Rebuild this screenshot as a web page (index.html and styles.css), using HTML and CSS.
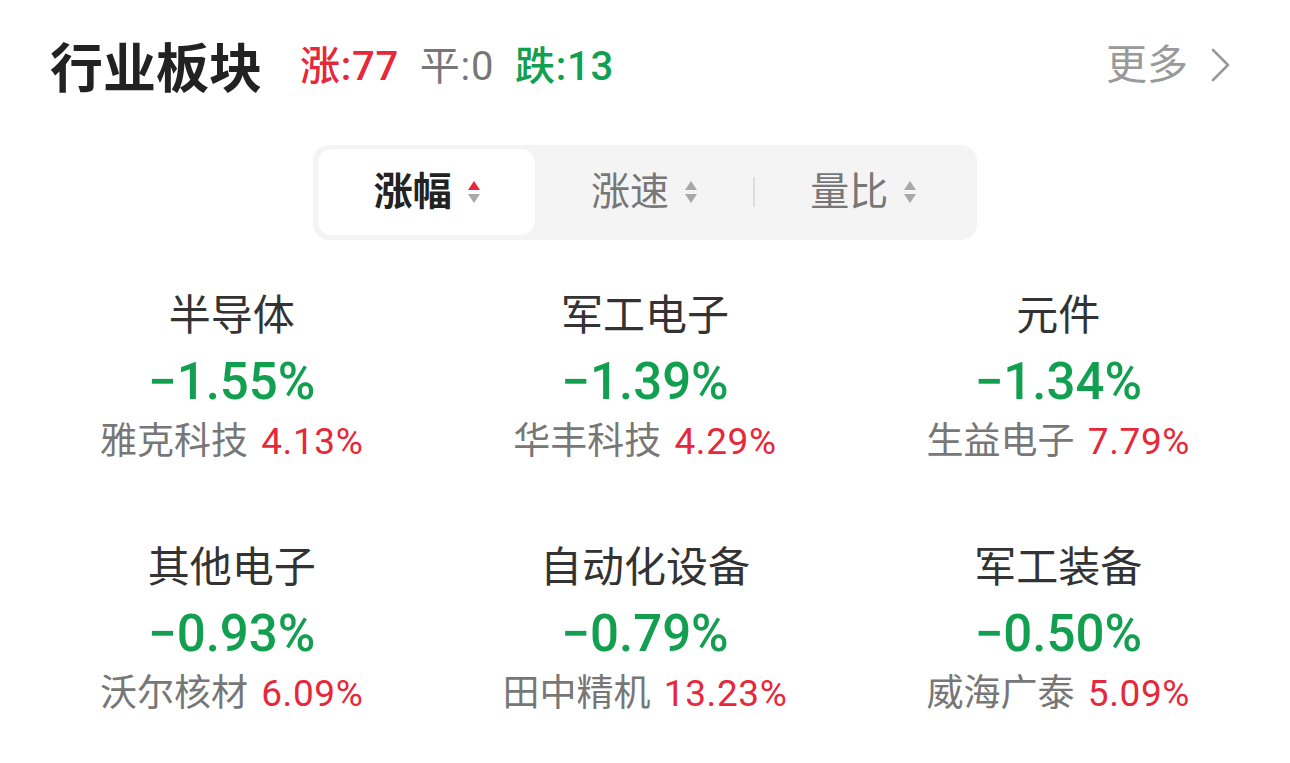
FILE: index.html
```html
<!DOCTYPE html>
<html lang="zh-CN">
<head>
<meta charset="utf-8">
<title>行业板块</title>
<link rel="stylesheet" href="styles.css">
</head>
<body>
<div class="card">
  <div class="header">
    <div class="title">行业板块</div>
    <div class="stats">
      <span class="up">涨:77</span>
      <span class="flat">平:0</span>
      <span class="down">跌:13</span>
    </div>
    <div class="more">更多
      <svg class="chev" width="22" height="34" viewBox="0 0 22 34"><path d="M3 2 L18 17 L3 32" fill="none" stroke="#999" stroke-width="2.6" stroke-linecap="round" stroke-linejoin="round"/></svg>
    </div>
  </div>

  <div class="tabs-wrap">
    <div class="tabs">
      <div class="tab active">涨幅
        <svg class="sort" width="12" height="24" viewBox="0 0 12 24"><path d="M6 1 L12 10 L0 10 Z" fill="#e6283a"/><path d="M0 14 L12 14 L6 23 Z" fill="#a8a8a8"/></svg>
      </div>
      <div class="tab">涨速
        <svg class="sort" width="12" height="24" viewBox="0 0 12 24"><path d="M6 1 L12 10 L0 10 Z" fill="#a8a8a8"/><path d="M0 14 L12 14 L6 23 Z" fill="#a8a8a8"/></svg>
      </div>
      <div class="divider"></div>
      <div class="tab">量比
        <svg class="sort" width="12" height="24" viewBox="0 0 12 24"><path d="M6 1 L12 10 L0 10 Z" fill="#a8a8a8"/><path d="M0 14 L12 14 L6 23 Z" fill="#a8a8a8"/></svg>
      </div>
    </div>
  </div>

  <div class="grid">
    <div class="cell">
      <div class="name">半导体</div>
      <div class="pct">−1.55%</div>
      <div class="stock">雅克科技 <span class="red">4.13%</span></div>
    </div>
    <div class="cell">
      <div class="name">军工电子</div>
      <div class="pct">−1.39%</div>
      <div class="stock">华丰科技 <span class="red">4.29%</span></div>
    </div>
    <div class="cell">
      <div class="name">元件</div>
      <div class="pct">−1.34%</div>
      <div class="stock">生益电子 <span class="red">7.79%</span></div>
    </div>
    <div class="cell">
      <div class="name">其他电子</div>
      <div class="pct">−0.93%</div>
      <div class="stock">沃尔核材 <span class="red">6.09%</span></div>
    </div>
    <div class="cell">
      <div class="name">自动化设备</div>
      <div class="pct">−0.79%</div>
      <div class="stock">田中精机 <span class="red">13.23%</span></div>
    </div>
    <div class="cell">
      <div class="name">军工装备</div>
      <div class="pct">−0.50%</div>
      <div class="stock">威海广泰 <span class="red">5.09%</span></div>
    </div>
  </div>
</div>
</body>
</html>
```

FILE: styles.css
```css
* { box-sizing: border-box; }
html, body {
  margin: 0;
  padding: 0;
  background: #ffffff;
}
body {
  font-family: Roboto, "Noto Sans CJK SC", sans-serif;
  color: #333;
}
.card {
  width: 1290px;
  height: 763px;
  overflow: hidden;
}
.header {
  display: flex;
  align-items: center;
  height: 60px;
  margin-top: 35px;
  padding: 0 58px 0 50px;
}
.title {
  font-family: "Noto Sans CJK SC", sans-serif;
  font-size: 53px;
  font-weight: 700;
  color: #222;
  line-height: 1;
}
.stats {
  display: flex;
  align-items: center;
  gap: 21px;
  margin-left: 38px;
  font-size: 40px;
  line-height: 1;
  margin-top: 4px;
  letter-spacing: 0.7px;
}
.up { color: #e6283a; font-weight: 500; }
.flat { color: #777; }
.down { color: #12a050; font-weight: 500; }
.more {
  margin-left: auto;
  display: flex;
  align-items: center;
  gap: 22px;
  font-size: 41px;
  color: #999;
  line-height: 1;
}
.chev { display: block; }

.tabs-wrap {
  display: flex;
  justify-content: center;
  margin-top: 50px;
}
.tabs {
  width: 664px;
  height: 95px;
  background: #f4f4f4;
  border-radius: 16px;
  padding: 4px 5px 5px;
  display: flex;
  align-items: stretch;
}
.tab {
  flex: 1;
  display: flex;
  align-items: center;
  justify-content: center;
  gap: 16px;
  font-size: 39px;
  color: #777;
  line-height: 1;
  border-radius: 14px;
}
.tab.active {
  background: #ffffff;
  color: #222;
  font-weight: 700;
}
.sort { display: block; }
.divider {
  width: 2px;
  height: 30px;
  align-self: center;
  background: #dddddd;
}

.grid {
  display: grid;
  grid-template-columns: repeat(3, 1fr);
  row-gap: 76px;
  padding: 0 25px;
  margin-top: 48px;
}
.cell {
  display: flex;
  flex-direction: column;
  align-items: center;
}
.name {
  font-size: 42px;
  line-height: 56px;
  color: #333;
}
.pct {
  font-size: 51px;
  font-weight: 500;
  line-height: 76px;
  color: #12a050;
}
.stock {
  font-size: 37px;
  line-height: 44px;
  color: #777;
  white-space: nowrap;
}
.red {
  color: #e6283a;
  letter-spacing: 0.6px;
  margin-left: 4px;
}
```
